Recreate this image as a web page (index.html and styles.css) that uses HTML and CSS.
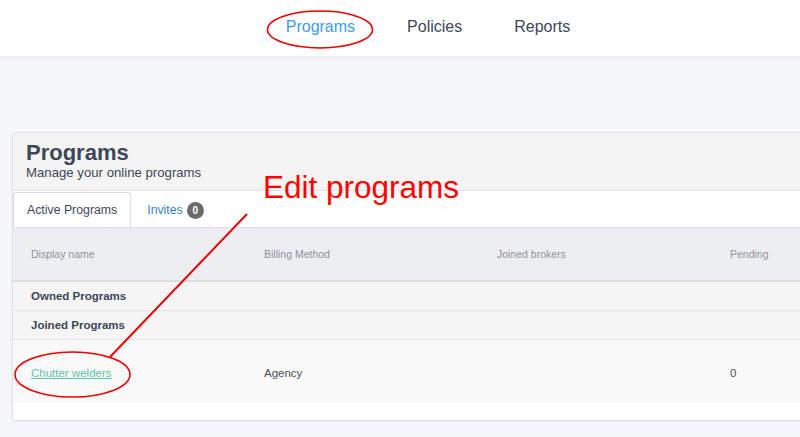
FILE: index.html
```html
<!DOCTYPE html>
<html lang="en">
<head>
    <meta charset="UTF-8">
    <title>Programs</title>
    <link rel="stylesheet" href="styles.css">
</head>
<body>
    <nav class="top-nav">
        <a class="nav-link active" href="#">Programs</a>
        <a class="nav-link" href="#">Policies</a>
        <a class="nav-link" href="#">Reports</a>
    </nav>

    <div class="panel">
        <div class="panel-header">
            <h1 class="panel-title">Programs</h1>
            <div class="panel-subtitle">Manage your online programs</div>
        </div>

        <div class="tabs">
            <a class="tab active" href="#">Active Programs</a>
            <a class="tab" href="#">Invites <span class="badge">0</span></a>
        </div>

        <table class="programs-table">
            <thead>
                <tr>
                    <th>Display name</th>
                    <th>Billing Method</th>
                    <th>Joined brokers</th>
                    <th>Pending</th>
                    <th></th>
                </tr>
            </thead>
            <tbody>
                <tr class="group-row">
                    <td colspan="5">Owned Programs</td>
                </tr>
                <tr class="group-row">
                    <td colspan="5">Joined Programs</td>
                </tr>
                <tr class="data-row">
                    <td><a class="program-link" href="#">Chutter welders</a></td>
                    <td>Agency</td>
                    <td></td>
                    <td>0</td>
                    <td></td>
                </tr>
            </tbody>
        </table>
    </div>

    <!-- annotations drawn on top of the screenshot -->
    <div class="note-text">Edit programs</div>
    <svg class="notes" width="800" height="437" viewBox="0 0 800 437" xmlns="http://www.w3.org/2000/svg">
        <ellipse cx="320" cy="29.5" rx="52.5" ry="18.5" fill="none" stroke="#ee0000" stroke-width="1.6"/>
        <line x1="247" y1="214" x2="110" y2="357" stroke="#ee0000" stroke-width="2"/>
        <ellipse cx="72.5" cy="374.5" rx="57.5" ry="22.5" fill="none" stroke="#ee0000" stroke-width="1.6"/>
    </svg>
</body>
</html>
```

FILE: styles.css
```css
html, body {
    overflow: hidden;
}

body {
    margin: 0;
    font-family: 'Liberation Sans', Arial, sans-serif;
    background-color: #f5f7fb;
    color: #3d4759;
    position: relative;
    height: 437px;
}

.top-nav {
    height: 57px;
    box-sizing: border-box;
    background-color: #fff;
    border-bottom: 1px solid #eceef2;
    box-shadow: 0 1px 4px rgba(0, 0, 0, 0.05);
    display: flex;
    justify-content: center;
    align-items: flex-start;
    padding: 18px 0 0 56px;
    gap: 52px;
}

.nav-link {
    font-size: 16px;
    line-height: 18px;
    color: #3d4759;
    text-decoration: none;
}

.nav-link.active {
    color: #3d9be9;
}

.panel {
    width: 1180px;
    margin: 75px 0 0 12px;
    background-color: #fff;
    border: 1px solid #e1e2e6;
    border-radius: 3px;
    box-shadow: 0 1px 3px rgba(0, 0, 0, 0.06);
    padding-bottom: 17px;
}

.panel-header {
    background-color: #f4f4f4;
    padding: 8px 13px 9px 13px;
    border-bottom: 1px solid #e3e3e3;
    border-radius: 3px 3px 0 0;
}

.panel-title {
    margin: 0;
    font-size: 22px;
    line-height: 24px;
    font-weight: bold;
    color: #3d4759;
}

.panel-subtitle {
    font-size: 13.2px;
    line-height: 16px;
    color: #3d4759;
}

.tabs {
    display: flex;
    padding-top: 1px;
    border-bottom: 1px solid #dfe0e4;
}

.tab {
    height: 35px;
    box-sizing: border-box;
    display: flex;
    align-items: center;
    padding: 0 13px;
    border: 1px solid transparent;
    border-bottom: none;
    font-size: 12.3px;
    color: #3a7fc1;
    text-decoration: none;
}

.tab + .tab {
    margin-left: 2px;
}

.tab.active {
    border-color: #dcdcdc;
    border-radius: 3px 3px 0 0;
    color: #3d4759;
    background-color: #fff;
}

.badge {
    display: inline-flex;
    align-items: center;
    justify-content: center;
    width: 17px;
    height: 17px;
    margin-left: 4px;
    border-radius: 50%;
    background-color: #6b6b6b;
    color: #fff;
    font-size: 10px;
    font-weight: bold;
}

.programs-table {
    width: 1165px;
    table-layout: fixed;
    border-collapse: collapse;
}

.programs-table th,
.programs-table td {
    width: 233px;
    padding: 0 0 0 18px;
    text-align: left;
    box-sizing: border-box;
}

.programs-table th {
    height: 53px;
    background-color: #edeef2;
    border-bottom: 2px solid #dcdde1;
    font-size: 10.5px;
    font-weight: normal;
    color: #8d929b;
}

.group-row td {
    height: 29px;
    background-color: #f5f5f5;
    border-bottom: 1px solid #e4e4e4;
    font-size: 11.5px;
    font-weight: bold;
    color: #3d4759;
}

.programs-table .data-row td {
    height: 64px;
    padding-top: 4px;
    background-color: #f9f9f9;
    font-size: 11.5px;
    color: #4a505c;
}

.program-link {
    color: #5cc3a4;
    text-decoration: underline;
}

.note-text {
    position: absolute;
    left: 263px;
    top: 172px;
    font-family: 'Liberation Sans', Arial, sans-serif;
    font-size: 31.5px;
    line-height: 31.5px;
    color: #ff0000;
}

.notes {
    position: absolute;
    left: 0;
    top: 0;
    pointer-events: none;
}
```
